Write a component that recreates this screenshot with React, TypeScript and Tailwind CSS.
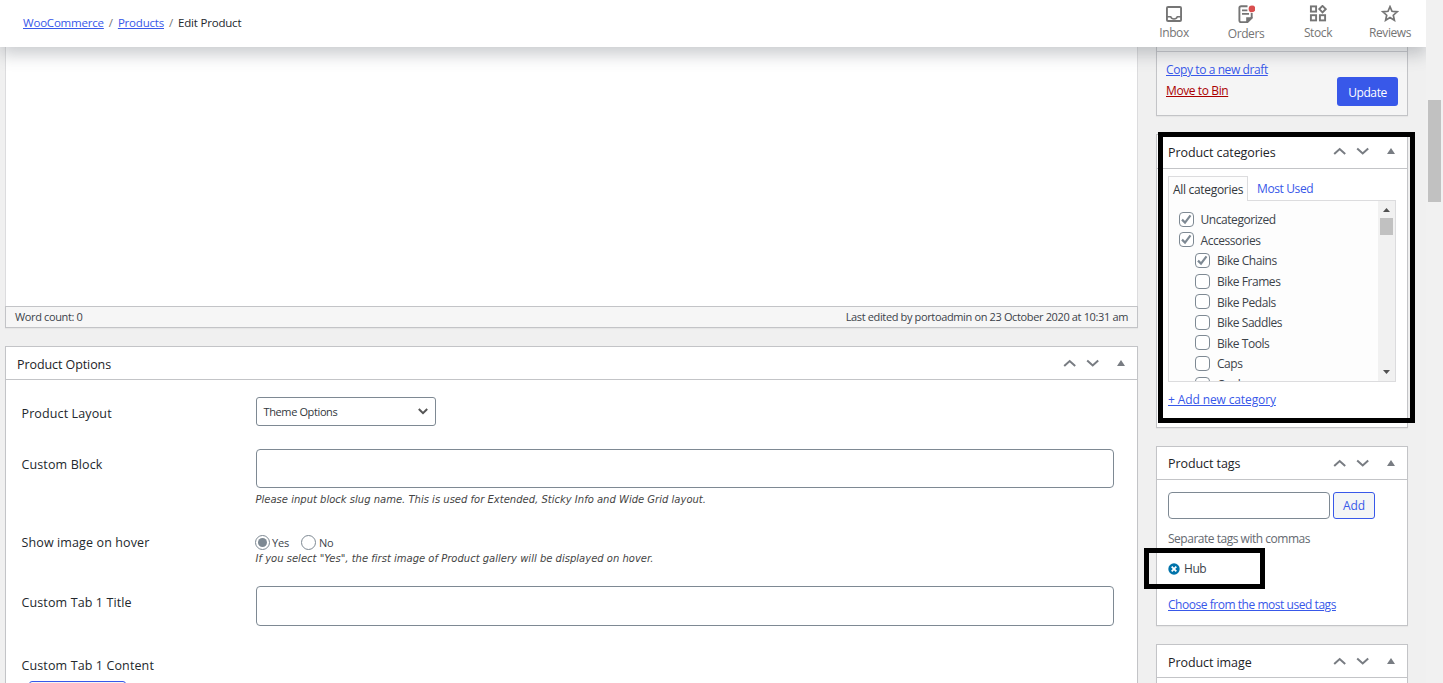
import type { ReactNode } from "react";
import clsx from "clsx";

const CATEGORIES = [
  { name: "Uncategorized", checked: true, child: false },
  { name: "Accessories", checked: true, child: false },
  { name: "Bike Chains", checked: true, child: true },
  { name: "Bike Frames", checked: false, child: true },
  { name: "Bike Pedals", checked: false, child: true },
  { name: "Bike Saddles", checked: false, child: true },
  { name: "Bike Tools", checked: false, child: true },
  { name: "Caps", checked: false, child: true },
  { name: "Cooler", checked: false, child: true },
];

function InboxIcon() {
  return (
    <svg width="16" height="16" viewBox="0 0 17 17" fill="none" stroke="#757575" strokeWidth="2">
      <rect x="1" y="1" width="15" height="15" rx="1.2" />
      <path d="M1 11.400h4c.5 1.600 1.800 2.300 3.500 2.300s3-.7 3.500-2.300h4" strokeWidth="1.600" />
    </svg>
  );
}

function OrdersIcon() {
  return (
    <svg width="18" height="18" viewBox="0 0 18 18" fill="none">
      <path
        d="M10.500 1.200H4.100C3 1.200 2.400 1.800 2.400 2.800v12.800c0 1 .6 1.600 1.500 1.600h6l4.800-4.600V8"
        stroke="#757575"
        strokeWidth="1.9"
      />
      <path d="M9.200 18v-5.700h6.400v.9L10.800 18z" fill="#757575" />
      <path d="M5 5.300h5.400M5 8.800h7" stroke="#757575" strokeWidth="1.700" />
      <circle cx="15" cy="3.900" r="3.400" fill="#d94f4f" />
    </svg>
  );
}

function StockIcon() {
  return (
    <svg width="18" height="17" viewBox="0 0 18 17" fill="none" stroke="#757575" strokeWidth="1.9">
      <rect x="1.900" y="1.400" width="5.200" height="5.200" />
      <rect x="1.900" y="10.200" width="5.200" height="5.200" />
      <rect x="10.900" y="10.200" width="5.200" height="5.200" />
      <path d="M13.500 0.900l3.200 3.200-3.200 3.200-3.200-3.200z" />
    </svg>
  );
}

function StarIcon() {
  return (
    <svg width="18" height="17" viewBox="0 0 18 17" fill="none" stroke="#757575" strokeWidth="1.700">
      <path d="M9 1.700l2 4.600 5.200.5-3.900 3.400 1.100 5.100L9 12.600l-4.400 2.700 1.100-5.100-3.900-3.400 5.200-.5z" />
    </svg>
  );
}

function Chevron({ down }: { down?: boolean }) {
  return (
    <svg width="13" height="9" viewBox="0 0 13 9" fill="none" stroke="#787c82" strokeWidth="2">
      <path d={down ? "M1.200 1.500l5.500 5 5.500-5" : "M1.200 7l5.500-5 5.500 5"} />
    </svg>
  );
}

function Triangle() {
  return (
    <svg width="8" height="6" viewBox="0 0 8 6" fill="#787c82">
      <path d="M4 0l4 6H0z" />
    </svg>
  );
}

function BoxHeader({ title, tight }: { title: string; tight?: boolean }) {
  return (
    <div className="flex h-[33px] shrink-0 items-center border-b border-[#c3c4c7] pr-3 pl-[11px]">
      <h2
        className={clsx(
          "flex-1 text-[12.5px] font-medium tracking-[-0.08px] text-[#1d2327]",
          tight ? "pt-0.5" : "pt-1",
        )}
      >
        {title}
      </h2>
      <Chevron />
      <span className="ml-2.5 flex">
        <Chevron down />
      </span>
      <span className="ml-[18px] flex">
        <Triangle />
      </span>
    </div>
  );
}

function Box({
  title,
  tight,
  className,
  children,
}: {
  title: string;
  tight?: boolean;
  className?: string;
  children?: ReactNode;
}) {
  return (
    <section className={clsx("flex flex-col border border-[#c3c4c7] bg-white shadow-[0_1px_1px_rgba(0,0,0,0.04)]", className)}>
      <BoxHeader title={title} tight={tight} />
      {children}
    </section>
  );
}

function Checkbox({ checked }: { checked: boolean }) {
  return (
    <span className="flex size-[15px] shrink-0 items-center justify-center rounded-[4px] border border-[#7e8993] bg-white">
      {checked && (
        <svg width="11" height="11" viewBox="0 0 11 11" fill="none" stroke="#7e8993" strokeWidth="2.200">
          <path d="M1 5.600l3 3 5.500-7.200" />
        </svg>
      )}
    </span>
  );
}

function Radio({ checked }: { checked?: boolean }) {
  return (
    <span className="flex size-[15px] shrink-0 items-center justify-center rounded-full border border-[#7e8993] bg-white">
      {checked && <span className="size-[9px] rounded-full bg-[#7e8993]" />}
    </span>
  );
}

function FieldLabel({ children }: { children: ReactNode }) {
  return (
    <div className="w-[234px] shrink-0 pl-[0.5px] text-[12.5px] leading-4 font-medium tracking-[0.12px] text-[#23282d]">
      {children}
    </div>
  );
}

function Help({ children }: { children: ReactNode }) {
  return (
    <p className="-ml-[0.5px] font-['DejaVu_Sans'] text-[10px] leading-4 tracking-[0.005px] text-[#444] italic">
      {children}
    </p>
  );
}

function HeaderTab({ label, icon, low }: { label: string; icon: ReactNode; low?: boolean }) {
  return (
    <div className="flex w-[72px] flex-col items-center">
      <div className={clsx("flex items-center", low ? "h-[18px]" : "h-[17px]")}>{icon}</div>
      <span className="mt-[3px] text-[12px] leading-4 tracking-[-0.4px] text-[#757575]">{label}</span>
    </div>
  );
}

export default function App() {
  return (
    <div className="flex h-[683px] w-[1443px] overflow-hidden bg-[#f0f0f0] font-['Open_Sans',sans-serif] text-[12px] tracking-[-0.44px] text-[#3c434a]">
      <div className="flex w-[1426px] shrink-0 flex-col overflow-hidden">
        <header className="relative z-10 flex h-[47px] shrink-0 items-center justify-between bg-white pl-[23px] shadow-[0_8px_16px_0_rgba(85,93,102,0.3)]">
          <nav className="flex items-center gap-[5px] pb-[2px] text-[11.5px] tracking-[-0.2px]">
            <a className="text-[#3858e9] underline">WooCommerce</a>
            <span className="text-[#757575]">/</span>
            <a className="text-[#3858e9] underline">Products</a>
            <span className="text-[#757575]">/</span>
            <span className="text-[#23282d]">Edit Product</span>
          </nav>
          <div className="flex h-full pt-[5px]">
            <HeaderTab label="Inbox" icon={<InboxIcon />} />
            <HeaderTab label="Orders" icon={<OrdersIcon />} low />
            <HeaderTab label="Stock" icon={<StockIcon />} />
            <HeaderTab label="Reviews" icon={<StarIcon />} />
          </div>
        </header>

        <div className="flex flex-1 gap-[18px] pl-[5px]">
          <main className="flex h-[636px] w-[1133px] shrink-0 flex-col">
            <div className="h-[259px] shrink-0 border-x border-[#dcdcde] bg-white" />
            <div className="flex h-[22px] shrink-0 items-center justify-between border border-[#c3c4c7] bg-[#f6f6f6] px-[9px] text-[11px] tracking-[-0.36px] shadow-[0_1px_1px_rgba(0,0,0,0.04)]">
              <span>Word count: 0</span>
              <span>Last edited by portoadmin on 23 October 2020 at 10:31 am</span>
            </div>

            <Box title="Product Options" className="mt-[18px] flex-1 border-b-0">
              <div className="flex flex-col px-[15px] pt-[17px]">
                <div className="flex h-[29px] items-center">
                  <div className="pt-1">
                    <FieldLabel>Product Layout</FieldLabel>
                  </div>
                  <div className="ml-px flex h-[29px] w-[180px] items-center justify-between rounded-[3px] border border-[#7e8993] pr-[7px] pl-[6.5px] text-[11px] tracking-[-0.38px] text-[#32373c]">
                    <span className="pt-0.5">Theme Options</span>
                    <svg width="10" height="7" viewBox="0 0 10 7" fill="none" stroke="#555" strokeWidth="2">
                      <path d="M0.800 1l4.200 4.200L9.200 1" />
                    </svg>
                  </div>
                </div>
                <div className="mt-[23px] flex">
                  <div className="pt-2">
                    <FieldLabel>Custom Block</FieldLabel>
                  </div>
                  <div className="ml-px">
                    <div className="h-[39px] w-[858px] rounded-[4px] border border-[#7e8993]" />
                    <div className="mt-1">
                      <Help>Please input block slug name. This is used for Extended, Sticky Info and Wide Grid layout.</Help>
                    </div>
                  </div>
                </div>
                <div className="mt-[27px] flex">
                  <FieldLabel>Show image on hover</FieldLabel>
                  <div>
                    <div className="mb-px flex h-[15px] items-center text-[11px] tracking-[-0.2px]">
                      <Radio checked />
                      <span className="ml-[2px] pt-px">Yes</span>
                      <span className="ml-3 flex">
                        <Radio />
                      </span>
                      <span className="ml-[3px] pt-px">No</span>
                    </div>
                    <div className="ml-px">
                      <Help>{'If you select "Yes", the first image of Product gallery will be displayed on hover.'}</Help>
                    </div>
                  </div>
                </div>
                <div className="mt-[19px] flex">
                  <div className="pt-[9px]">
                    <FieldLabel>Custom Tab 1 Title</FieldLabel>
                  </div>
                  <div className="ml-px h-[40px] w-[858px] rounded-[4px] border border-[#7e8993]" />
                </div>
                <div className="mt-8">
                  <FieldLabel>Custom Tab 1 Content</FieldLabel>
                </div>
                <div className="mt-[7px] ml-2 h-[28px] w-[97px] shrink-0 rounded-[3px] border border-[#3858e9] bg-[#f3f5f6]" />
              </div>
            </Box>
          </main>

          <aside className="flex h-[636px] w-[252px] shrink-0 flex-col">
            <div className="flex h-[69px] shrink-0 flex-col border border-t-0 border-[#c3c4c7] bg-[#f5f5f5] shadow-[0_1px_1px_rgba(0,0,0,0.04)]">
              <div className="h-[5px] border-b border-[#c9cacd]" />
              <div className="flex justify-between px-[9px] pt-2">
                <div className="flex flex-col gap-[5px] pt-[2px] leading-4 tracking-[-0.4px]">
                  <a className="text-[#3858e9] underline">Copy to a new draft</a>
                  <a className="text-[#a00] underline">Move to Bin</a>
                </div>
                <button className="mt-[17px] h-[29px] w-[61px] rounded-[3px] bg-[#3858e9] pt-0.5 font-medium tracking-[-0.4px] text-white">
                  Update
                </button>
              </div>
            </div>

            <div className="relative mt-[18px] shrink-0">
              <Box title="Product categories" className="h-[294px] *:first:h-[34px] *:first:pb-px">
                <div className="px-[11px] pt-[7px]">
                  <div className="flex h-[24px]">
                    <span className="relative z-[1] -mb-px flex h-[25px] w-[80px] items-center justify-center border border-b-0 border-[#dcdcde] bg-[#fdfdfd] pt-px tracking-[-0.3px] text-[#32373c]">
                      All categories
                    </span>
                    <span className="ml-[9px] flex items-center pt-0.5 tracking-[-0.38px] text-[#3858e9]">Most Used</span>
                  </div>
                  <div className="flex h-[182px] w-[228px] border border-[#dcdcde] bg-[#fdfdfd]">
                    <ul className="flex flex-1 flex-col overflow-hidden pt-2">
                      {CATEGORIES.map((c) => (
                        <li
                          key={c.name}
                          className={clsx(
                            "flex h-[20.6px] shrink-0 items-center",
                            c.child ? "gap-[7px] pl-[26px]" : "gap-[6.5px] pl-[10px]",
                          )}
                        >
                          <Checkbox checked={c.checked} />
                          <span className="pt-0.5">{c.name}</span>
                        </li>
                      ))}
                    </ul>
                    <div className="flex w-[17px] flex-col items-center bg-[#f1f1f1]">
                      <svg className="mt-[7px]" width="7" height="4" viewBox="0 0 7 4" fill="#505050">
                        <path d="M3.500 0L7 4H0z" />
                      </svg>
                      <span className="mt-[6px] h-[17px] w-[13px] bg-[#c1c1c1]" />
                      <svg className="mt-auto mb-[7px]" width="7" height="4" viewBox="0 0 7 4" fill="#505050">
                        <path d="M3.500 4L0 0h7z" />
                      </svg>
                    </div>
                  </div>
                  <a className="mt-[9px] block leading-[18px] font-medium tracking-[-0.12px] text-[#3858e9] underline">
                    + Add new category
                  </a>
                </div>
              </Box>
              {/* highlight frame over the categories panel */}
              <div className="absolute -top-0.5 left-0.5 z-20 h-[291px] w-[257px] border-[5px] border-black" />
            </div>

            <div className="relative mt-[18px] shrink-0">
              <Box title="Product tags" tight className="h-[180px]">
                <div className="px-[11px] pt-3">
                  <div className="flex gap-[3px]">
                    <div className="h-[27px] w-[162px] rounded-[4px] border border-[#7e8993]" />
                    <button className="h-[27px] w-[42px] rounded-[3px] border border-[#3858e9] bg-[#f3f5f6] tracking-[-0.1px] text-[#3858e9]">
                      Add
                    </button>
                  </div>
                  <p className="mt-3 leading-4 tracking-[-0.48px] text-[#646970]">Separate tags with commas</p>
                  <div className="mt-[14px] flex items-center gap-1 leading-4">
                    <svg width="12" height="12" viewBox="0 0 12 12">
                      <circle cx="6" cy="6" r="5.700" fill="#0073aa" />
                      <path d="M3.700 3.700l4.600 4.600M8.300 3.700L3.700 8.300" stroke="#fff" strokeWidth="1.800" />
                    </svg>
                    Hub
                  </div>
                  <a className="mt-5 block leading-4 tracking-[-0.46px] text-[#3858e9] underline">
                    Choose from the most used tags
                  </a>
                </div>
              </Box>
              <div className="absolute top-[102px] -left-3 z-20 h-[41px] w-[121px] border-[5px] border-black" />
            </div>

            <Box title="Product image" className="mt-[18px] flex-1 border-b-0" />
          </aside>
        </div>
      </div>

      {/* page scrollbar */}
      <div className="flex-1 bg-[#f1f1f1] pl-0.5">
        <div className="mt-[100px] h-[102px] w-[13px] bg-[#c1c1c1]" />
      </div>
    </div>
  );
}
